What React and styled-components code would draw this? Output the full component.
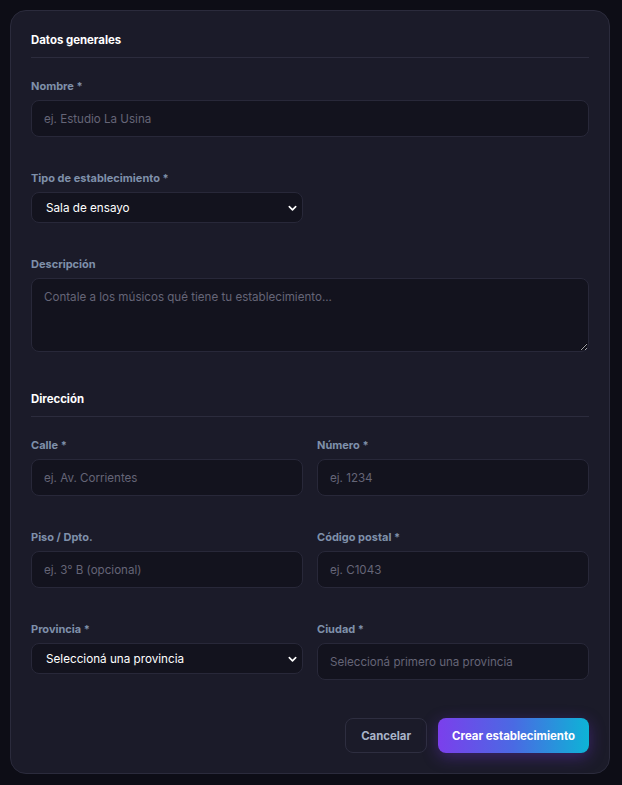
import React from 'react';
import styled, { createGlobalStyle } from 'styled-components';

const GlobalStyle = createGlobalStyle`
  html, body {
    margin: 0;
    background: #0d0d16;
  }
  body {
    font-family: Inter, "Noto Sans", sans-serif;
    -webkit-font-smoothing: antialiased;
  }
  * { box-sizing: border-box; }
`;

const Page = styled.div`
  padding: 10px 12px 11px 10px;
`;

const Card = styled.form`
  background: #1b1b29;
  border: 1px solid #2b2b3c;
  border-radius: 16px;
  padding: 20px 20px 20px 20px;
  display: flex;
  flex-direction: column;
  gap: 38px;
`;

const Section = styled.section`
  display: flex;
  flex-direction: column;
`;

const SectionTitle = styled.h3`
  margin: 0 0 20px;
  padding-bottom: 8px;
  border-bottom: 1px solid #2c2c3d;
  font-size: 11.4px;
  line-height: 18px;
  font-weight: 700;
  color: #ffffff;
`;

const Fields = styled.div`
  display: grid;
  grid-template-columns: 1fr 1fr;
  column-gap: 14px;
  row-gap: 33px;
`;

const Field = styled.div`
  grid-column: ${p => (p.$wide ? '1 / -1' : 'auto')};
  display: flex;
  flex-direction: column;
  gap: 6px;
`;

const Label = styled.label`
  font-size: 11px;
  line-height: 16px;
  font-weight: 700;
  color: #7f90aa;
`;

const fieldBase = `
  width: 100%;
  background: #13131e;
  border: 1px solid #282839;
  border-radius: 8px;
  font-family: Inter, "Noto Sans", sans-serif;
  font-size: 11.6px;
  outline: none;
  &::placeholder { color: #656577; }
`;

const Input = styled.input`
  ${fieldBase}
  height: 37px;
  padding: 0 12px;
  color: #e6e6ee;
`;

const TextArea = styled.textarea`
  ${fieldBase}
  display: block;
  height: 74px;
  padding: 11px 12px;
  color: #e6e6ee;
  resize: vertical;
`;

const SelectWrap = styled.div`
  position: relative;
`;

const Select = styled.select`
  ${fieldBase}
  appearance: none;
  height: 31px;
  padding: 0 32px 0 14px;
  font-size: 11.7px;
  color: #ffffff;
`;

const Chevron = styled.svg`
  position: absolute;
  right: 5px;
  top: 50%;
  width: 11px;
  height: 11px;
  transform: translateY(-50%);
  pointer-events: none;
`;

const Actions = styled.div`
  display: flex;
  justify-content: flex-end;
  gap: 11px;
`;

const Button = styled.button`
  height: 35px;
  border-radius: 8px;
  font-family: Inter, "Noto Sans", sans-serif;
  font-size: 11.4px;
  font-weight: 700;
  cursor: pointer;
  padding: ${p => (p.$primary ? '0 14px' : '0 15px')};
  color: ${p => (p.$primary ? '#ffffff' : '#a9b4c8')};
  background: ${p => (p.$primary ? 'linear-gradient(90deg, #7b3fec 0%, #4a6ae3 50%, #0db4d6 100%)' : 'transparent')};
  border: ${p => (p.$primary ? 'none' : '1px solid #2e2e40')};
  box-shadow: ${p => (p.$primary ? '0 4px 16px rgba(124, 58, 237, 0.35)' : 'none')};
`;

const SelectField = ({ value, children }) => (
  <SelectWrap>
    <Select defaultValue={value}>{children}</Select>
    <Chevron viewBox="0 0 24 24" fill="none" stroke="#ffffff" strokeWidth="3.5" strokeLinecap="round" strokeLinejoin="round">
      <path d="M5 9l7 7 7-7" />
    </Chevron>
  </SelectWrap>
);

const App = () => (
  <Page>
    <GlobalStyle />
    <Card onSubmit={e => e.preventDefault()}>
      <Section>
        <SectionTitle>Datos generales</SectionTitle>
        <Fields>
          <Field $wide>
            <Label>Nombre *</Label>
            <Input placeholder="ej. Estudio La Usina" />
          </Field>
          <Field>
            <Label>Tipo de establecimiento *</Label>
            <SelectField value="sala">
              <option value="sala">Sala de ensayo</option>
              <option value="estudio">Estudio de grabación</option>
            </SelectField>
          </Field>
          <Field $wide>
            <Label>Descripción</Label>
            <TextArea placeholder="Contale a los músicos qué tiene tu establecimiento..." />
          </Field>
        </Fields>
      </Section>

      <Section>
        <SectionTitle>Dirección</SectionTitle>
        <Fields>
          <Field>
            <Label>Calle *</Label>
            <Input placeholder="ej. Av. Corrientes" />
          </Field>
          <Field>
            <Label>Número *</Label>
            <Input placeholder="ej. 1234" />
          </Field>
          <Field>
            <Label>Piso / Dpto.</Label>
            <Input placeholder="ej. 3° B (opcional)" />
          </Field>
          <Field>
            <Label>Código postal *</Label>
            <Input placeholder="ej. C1043" />
          </Field>
          <Field>
            <Label>Provincia *</Label>
            <SelectField value="">
              <option value="">Seleccioná una provincia</option>
              <option value="ba">Buenos Aires</option>
            </SelectField>
          </Field>
          <Field>
            <Label>Ciudad *</Label>
            <Input placeholder="Seleccioná primero una provincia" disabled />
          </Field>
        </Fields>
      </Section>

      <Actions>
        <Button type="button">Cancelar</Button>
        <Button type="submit" $primary>Crear establecimiento</Button>
      </Actions>
    </Card>
  </Page>
);

export default App;
